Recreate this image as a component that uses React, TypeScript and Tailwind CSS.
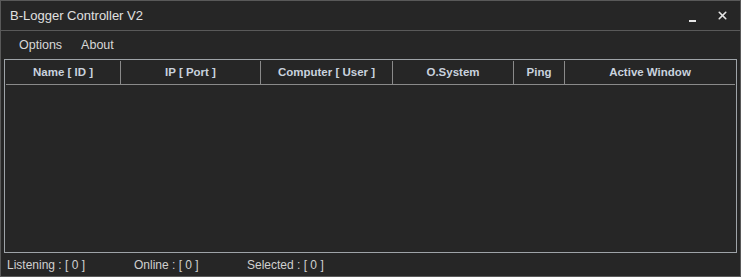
import { X } from "lucide-react";

const columns = [
  { label: "Name [ ID ]", width: "w-[115px]" },
  { label: "IP [ Port ]", width: "w-[140px]" },
  { label: "Computer [ User ]", width: "w-[132px]" },
  { label: "O.System", width: "w-[121px]" },
  { label: "Ping", width: "w-[51px]" },
  { label: "Active Window", width: "flex-1" },
];

const statusItems = [
  { label: "Listening : [ 0 ]", width: "w-[127px]" },
  { label: "Online : [ 0 ]", width: "w-[113px]" },
  { label: "Selected : [ 0 ]", width: "w-[120px]" },
];

export default function App() {
  return (
    <div
      className="w-[741px] h-[277px] bg-[#262626] border border-[#595959] flex flex-col text-[#d4d4d4]"
      style={{ fontFamily: '"Liberation Sans", Arial, sans-serif' }}
    >
      {/* Title bar */}
      <div className="h-[30px] shrink-0 flex items-center justify-between border-b border-[#595959] pl-[9px]">
        <span className="text-[13px] text-[#e0e0e0]">B-Logger Controller V2</span>
        <div className="flex items-center h-full">
          <button className="w-[30px] h-full flex items-center justify-center">
            <span className="block w-[7px] h-[2px] bg-[#e6e6e6] mt-[10px] ml-[1px]" />
          </button>
          <button className="w-[30px] h-full flex items-center justify-center mr-[3px] text-[#e6e6e6]">
            <X className="w-[13px] h-[13px]" strokeWidth={3} />
          </button>
        </div>
      </div>

      {/* Menu */}
      <div className="h-[28px] shrink-0 flex items-center gap-[19px] pl-[18px] text-[12.5px] text-[#d8d8d8]">
        <span>Options</span>
        <span>About</span>
      </div>

      {/* List */}
      <div className="mx-[3px] h-[194px] shrink-0 border border-[#9ea3a8] flex flex-col">
        <div className="h-[24px] mx-[1px] mt-[1px] flex border-b border-[#8a8a8a]">
          {columns.map((col, i) => (
            <div
              key={col.label}
              className={`${col.width} flex items-center justify-center text-[11.5px] font-bold text-[#c9d2de] ${
                i < columns.length - 1 ? "border-r border-[#8a8a8a]" : ""
              }`}
            >
              {col.label}
            </div>
          ))}
        </div>
      </div>

      {/* Status bar */}
      <div className="flex-1 flex items-center pl-[6px] pt-[1px] text-[12px] text-[#d0d0d0]">
        {statusItems.map((item) => (
          <span key={item.label} className={item.width}>
            {item.label}
          </span>
        ))}
      </div>
    </div>
  );
}
